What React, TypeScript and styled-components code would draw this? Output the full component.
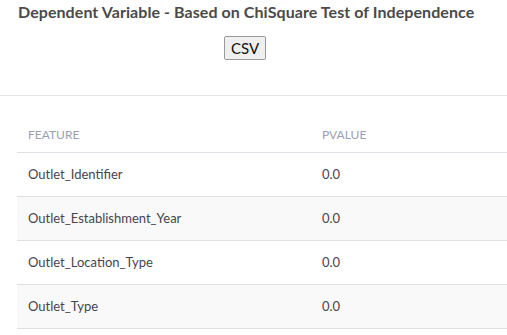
import React from "react";
import styled, { createGlobalStyle } from "styled-components";

const Global = createGlobalStyle`
  html, body { margin: 0; padding: 0; background: #fff; }
  body { font-family: Lato, "Noto Sans", sans-serif; }
`;

const Page = styled.div`
  width: 507px;
  overflow: hidden;
`;

const Header = styled.div`
  display: flex;
  flex-direction: column;
  align-items: flex-start;
  padding: 2px 0 0 18px;
  height: 93px;
  border-bottom: 1px solid #e4e4e8;
`;

const Title = styled.h4`
  margin: 0;
  font-size: 16px;
  font-weight: 700;
  color: #4a4a4a;
  line-height: 20px;
  letter-spacing: 0.07px;
`;

const ButtonRow = styled.div`
  align-self: stretch;
  display: flex;
  justify-content: center;
  padding: 14px 35px 0 0;
`;

const CsvButton = styled.button`
  font-family: Lato, "Noto Sans", sans-serif;
  font-size: 15px;
  color: #111;
  background: #efefef;
  border: 1px solid #9a9a9a;
  border-radius: 2px;
  height: 24px;
  width: 42px;
  padding: 0;
`;

const TableWrap = styled.div`
  padding: 21px 0 0 17px;
`;

const Table = styled.table`
  width: 540px;
  border-collapse: collapse;
  font-size: 13px;
`;

const Th = styled.th<{ $w?: number }>`
  text-align: left;
  font-weight: 400;
  color: #9aa0b4;
  text-transform: uppercase;
  font-size: 12px;
  padding: 0 11px;
  height: 35px;
  border-bottom: 1px solid #dee0e6;
  width: ${(p) => (p.$w ? `${p.$w}px` : "auto")};
`;

const Tr = styled.tr<{ $striped: boolean }>`
  background: ${(p) => (p.$striped ? "#f9f9f9" : "#fff")};
  border-bottom: 1px solid #e0e0e0;
`;

const Td = styled.td`
  padding: 0 11px 1px;
  height: 42px;
  color: #45454f;
`;

const rows = [
  ["Outlet_Identifier", "0.0"],
  ["Outlet_Establishment_Year", "0.0"],
  ["Outlet_Location_Type", "0.0"],
  ["Outlet_Type", "0.0"],
];

export default function App() {
  return (
    <Page>
      <Global />
      <Header>
        <Title>Dependent Variable - Based on ChiSquare Test of Independence</Title>
        <ButtonRow>
          <CsvButton>CSV</CsvButton>
        </ButtonRow>
      </Header>
      <TableWrap>
        <Table>
          <thead>
            <tr>
              <Th $w={272}>Feature</Th>
              <Th>pValue</Th>
            </tr>
          </thead>
          <tbody>
            {rows.map((r, i) => (
              <Tr key={r[0]} $striped={i % 2 === 1}>
                <Td>{r[0]}</Td>
                <Td>{r[1]}</Td>
              </Tr>
            ))}
          </tbody>
        </Table>
      </TableWrap>
    </Page>
  );
}
